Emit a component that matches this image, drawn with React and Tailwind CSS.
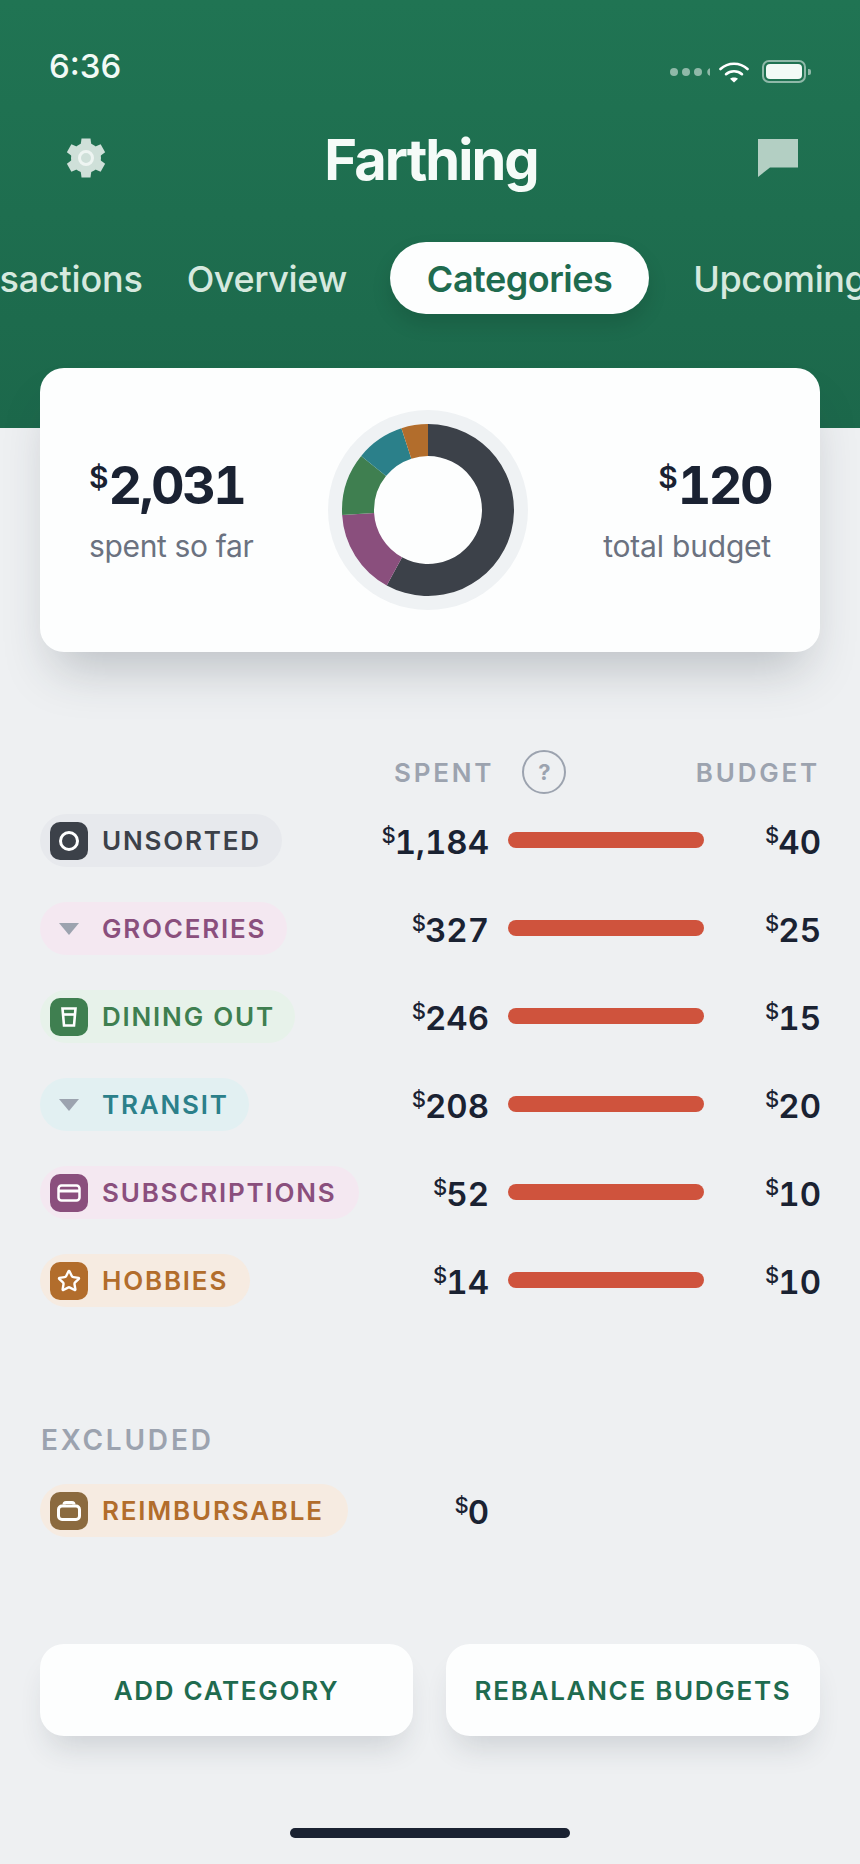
import { Star } from "lucide-react";

const FONT = "font-['Inter','Liberation_Sans',sans-serif]";

const RED_BAR = "bg-[#cf533d]";

function polar(r, deg) {
  const a = ((deg - 90) * Math.PI) / 180;
  return [100 + r * Math.cos(a), 100 + r * Math.sin(a)];
}

function segment(from, to) {
  const [x1, y1] = polar(86, from);
  const [x2, y2] = polar(86, to);
  const [x3, y3] = polar(54, to);
  const [x4, y4] = polar(54, from);
  const large = to - from > 180 ? 1 : 0;
  return `M${x1} ${y1}A86 86 0 ${large} 1 ${x2} ${y2}L${x3} ${y3}A54 54 0 ${large} 0 ${x4} ${y4}Z`;
}

function Donut() {
  const parts = [
    [0, 208.7, "#3c4149"],
    [208.7, 266.7, "#8a4f7d"],
    [266.7, 309, "#3f7f50"],
    [309, 342, "#2b808a"],
    [342, 360, "#b26d2c"],
  ];
  return (
    <svg width="200" height="200" viewBox="0 0 200 200" className="shrink-0">
      <circle cx="100" cy="100" r="100" fill="#eff2f4" />
      <circle cx="100" cy="100" r="86" fill="#fdfefe" />
      {parts.map(([a, b, c]) => (
        <path key={c} d={segment(a, b)} fill={c} />
      ))}
    </svg>
  );
}

function Gear() {
  return (
    <svg width="40" height="40" viewBox="0 0 40 40">
      <g fill="#cfe0d9">
        <circle cx="20" cy="20" r="15" />
        {[0, 60, 120, 180, 240, 300].map((r) => (
          <path key={r} d="M15.5 0.5H24.5L25.5 8H14.5Z" transform={`rotate(${r} 20 20)`} />
        ))}
      </g>
      <circle cx="20" cy="20" r="6.5" fill="#cfe0d9" stroke="#eef5f2" strokeWidth="3" />
    </svg>
  );
}

function Money({ value, big }) {
  if (big) {
    return (
      <div className="flex items-start text-[52px] leading-[60px] font-bold tracking-[-2.5px] tabular-nums text-[#1a2232]">
        <span className="text-[30px] leading-[42px] font-semibold tracking-normal">$</span>
        <span>{value}</span>
      </div>
    );
  }
  return (
    <div className="flex items-start justify-end -mr-[1px] text-[33px] leading-[40px] font-[590] tabular-nums text-[#1a2232]">
      <span className="text-[22px] leading-[26px] font-medium -mr-[1px]">$</span>
      <span>{value}</span>
    </div>
  );
}

function Triangle() {
  return (
    <svg width="38" height="38" viewBox="0 0 38 38">
      <path d="M9 13H29L19 25Z" fill="#9ca3af" />
    </svg>
  );
}

function Tile({ bg, children }) {
  return (
    <div className={`w-[38px] h-[38px] rounded-[10px] flex items-center justify-center shrink-0 ${bg}`}>
      {children}
    </div>
  );
}

function Pill({ pill, text, label, icon }) {
  return (
    <div className={`inline-flex items-center h-[53px] pl-[10px] rounded-full gap-[14px] ${pill}`}>
      {icon}
      <span className={`text-[26px] leading-none font-semibold tracking-[1.8px] whitespace-nowrap ${text}`}>{label}</span>
    </div>
  );
}

const rows = [
  {
    label: "UNSORTED",
    spent: "1,184",
    budget: "40",
    pill: "bg-[#e7e9ed] pr-[21px]",
    text: "text-[#3c4149]",
    icon: (
      <Tile bg="bg-[#3c4149]">
        <svg width="22" height="22" viewBox="0 0 22 22">
          <circle cx="11" cy="11" r="8.5" fill="none" stroke="white" strokeWidth="3" />
        </svg>
      </Tile>
    ),
  },
  { label: "GROCERIES", spent: "327", budget: "25", pill: "bg-[#f4e8f1] pr-[21px]", text: "text-[#8a4f7d]", icon: <Triangle /> },
  {
    label: "DINING OUT",
    spent: "246",
    budget: "15",
    pill: "bg-[#e7f2ea] pr-[20px]",
    text: "text-[#3f7f50]",
    icon: (
      <Tile bg="bg-[#3f7f50]">
        <svg width="16" height="20" viewBox="0 0 16 20" fill="none" stroke="white" strokeWidth="2.6">
          <path d="M1.5 1.5H14.5L13 18.5H3Z" />
          <path d="M2 7.5H14" />
        </svg>
      </Tile>
    ),
  },
  { label: "TRANSIT", spent: "208", budget: "20", pill: "bg-[#e2f0f2] pr-[20px]", text: "text-[#2b808a]", icon: <Triangle /> },
  {
    label: "SUBSCRIPTIONS",
    spent: "52",
    budget: "10",
    pill: "bg-[#f4e8f1] pr-[22px]",
    text: "text-[#8a4f7d]",
    icon: (
      <Tile bg="bg-[#8a4f7d]">
        <svg width="24" height="18" viewBox="0 0 24 18" fill="none" stroke="white" strokeWidth="2.5">
          <rect x="1.5" y="1.5" width="21" height="15" rx="3" />
          <path d="M1.5 7H22.5" strokeWidth="3" />
        </svg>
      </Tile>
    ),
  },
  {
    label: "HOBBIES",
    spent: "14",
    budget: "10",
    pill: "bg-[#f6ebe1] pr-[22px]",
    text: "text-[#b26d2c]",
    icon: (
      <Tile bg="bg-[#b26d2c]">
        <Star size={24} color="white" strokeWidth={2.4} />
      </Tile>
    ),
  },
];

function Row({ row }) {
  return (
    <div className="h-[88px] flex items-start">
      <div className="w-[340px]">
        <Pill {...row} />
      </div>
      <div className="w-[108px] mt-[8px]">
        <Money value={row.spent} />
      </div>
      <div className={`w-[196px] h-[16px] rounded-[8px] ml-[20px] mt-[18px] ${RED_BAR}`} />
      <div className="flex-1 mt-[8px]">
        <Money value={row.budget} />
      </div>
    </div>
  );
}

export default function App() {
  return (
    <div className={`w-[860px] h-[1864px] bg-[#eef0f2] overflow-hidden ${FONT}`}>
      <header className="h-[428px] bg-gradient-to-b from-[#207453] to-[#1c684b] overflow-hidden">
        <div className="h-[110px] pl-[49px] pr-[49px] pt-[48px] flex justify-between items-start">
          <span className="text-[33px] leading-[36px] font-medium text-[#f2faf6]">6:36</span>
          <div className="flex items-center mt-[12px]">
            <svg width="40" height="8" viewBox="0 0 40 8" fill="white" fillOpacity="0.5" className="mr-[9px]">
              <circle cx="4" cy="4" r="4" />
              <circle cx="16" cy="4" r="4" />
              <circle cx="28" cy="4" r="4" />
              <path d="M40 0.2A4 4 0 0 0 40 7.8Z" />
            </svg>
            <svg width="30" height="22" viewBox="0 0 30 22" fill="none" stroke="white" strokeWidth="2.6" strokeLinecap="round" className="mr-[13px]">
              <path d="M1.5 8C9 1 21 1 28.5 8" />
              <path d="M7 13.2C11.5 9.2 18.5 9.2 23 13.2" />
              <path d="M11 17.8L15 21.5L19 17.8C17 16 13 16 11 17.8Z" fill="white" stroke="none" />
            </svg>
            <div className="w-[44px] h-[23px] border-2 border-white/50 rounded-[7px] p-[2px]">
              <div className="w-full h-full bg-[#f2faf6] rounded-[4px]" />
            </div>
            <div className="w-[3px] h-[6px] bg-white/50 rounded-r-[2px] ml-[2px]" />
          </div>
        </div>
        <div className="h-[96px] pl-[66px] pr-[62px] flex items-center justify-between">
          <Gear />
          <span className="text-[56px] leading-none font-bold tracking-[-2px] text-[#f5fbf8] mt-[4px] -ml-[2px]">Farthing</span>
          <svg width="40" height="38" viewBox="0 0 40 38" fill="#b3cfc3">
            <path d="M0 0H40V28.5H12L0 38Z" />
          </svg>
        </div>
        <div className="h-[72px] mt-[36px] flex items-center gap-[43px] -ml-[77px] text-[36px] leading-none font-medium tracking-[-0.4px] text-[#d6e9df] whitespace-nowrap">
          <span className="shrink-0 mt-[2px] mr-[1px] tracking-[-0.2px]">Transactions</span>
          <span className="shrink-0 mt-[2px]">Overview</span>
          <span className="shrink-0 h-[72px] pt-[2px] px-[37px] flex items-center rounded-full bg-[#fdfefe] text-[#1f6b4f] font-semibold tracking-[-0.5px] shadow-[0_10px_20px_rgba(0,0,0,0.12)]">
            Categories
          </span>
          <span className="shrink-0 mt-[2px] ml-[1px]">Upcoming</span>
        </div>
      </header>

      <main className="px-[40px]">
        <section className="-mt-[60px] h-[284px] bg-[#fdfefe] rounded-[24px] pl-[49px] pr-[49px] flex items-center justify-between relative shadow-[0_30px_50px_-15px_rgba(40,50,60,0.26)]">
          <div className="w-[196px]">
            <Money big value="2,031" />
            <div className="text-[30px] leading-[36px] tracking-[-0.35px] text-[#6b7280] mt-[12px] whitespace-nowrap">spent so far</div>
          </div>
          <Donut />
          <div className="w-[200px] flex flex-col items-end">
            <Money big value="120" />
            <div className="text-[30px] leading-[36px] tracking-[-0.2px] text-[#6b7280] mt-[12px]">total budget</div>
          </div>
        </section>

        <div className="mt-[98px] h-[44px] flex items-center text-[26px] font-semibold tracking-[2.8px] text-[#9ca3af]">
          <span className="ml-[354px]">SPENT</span>
          <span className="ml-[28px] w-[44px] h-[44px] rounded-full border-2 border-[#9ca3af] flex items-center justify-center text-[22px] font-bold tracking-normal">?</span>
          <span className="ml-auto">BUDGET</span>
        </div>

        <div className="mt-[20px]">
          {rows.map((row) => (
            <Row key={row.label} row={row} />
          ))}
        </div>

        <div className="mt-[82px] pl-[1px] text-[28px] leading-[32px] font-semibold tracking-[2.8px] text-[#9ca3af]">EXCLUDED</div>

        <div className="mt-[28px] flex items-start">
          <div className="w-[340px]">
            <Pill
              label="REIMBURSABLE"
              pill="bg-[#f6ebe1] pr-[24px]"
              text="text-[#b26d2c]"
              icon={
                <Tile bg="bg-[#8b6a3f]">
                  <svg width="26" height="22" viewBox="0 0 26 22" fill="none" stroke="white" strokeWidth="3">
                    <rect x="2.5" y="6" width="21" height="13.5" rx="3.5" />
                    <path d="M8 4.5C8 3 9 2.5 10 2.5H16C17 2.5 18 3 18 4.5" />
                  </svg>
                </Tile>
              }
            />
          </div>
          <div className="w-[108px] mt-[8px]">
            <Money value="0" />
          </div>
        </div>

        <div className="mt-[107px] flex gap-[33px]">
          <button className="w-[373px] h-[92px] rounded-[24px] bg-[#fdfefe] text-[26px] font-semibold tracking-[1.7px] text-[#1f6b4f] whitespace-nowrap shadow-[0_20px_30px_-10px_rgba(40,50,60,0.16)]">
            ADD CATEGORY
          </button>
          <button className="w-[374px] h-[92px] rounded-[24px] bg-[#fdfefe] text-[26px] font-semibold tracking-[1.7px] text-[#1f6b4f] whitespace-nowrap shadow-[0_20px_30px_-10px_rgba(40,50,60,0.16)]">
            REBALANCE BUDGETS
          </button>
        </div>

        <div className="mt-[92px] mx-auto w-[280px] h-[10px] rounded-full bg-[#1a2232]" />
      </main>
    </div>
  );
}
